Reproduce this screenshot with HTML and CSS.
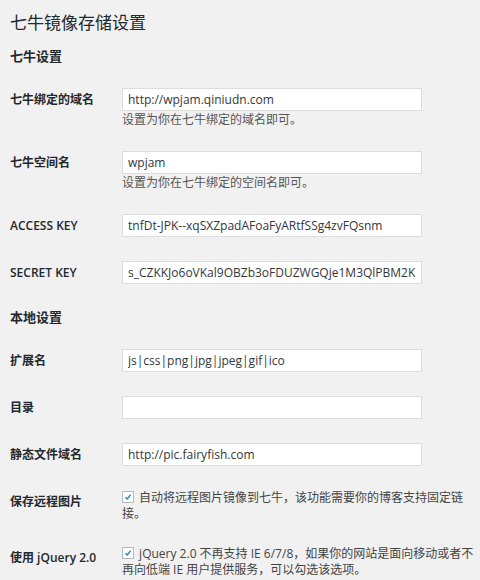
FILE: index.html
```html
<!DOCTYPE html>
<html lang="zh-CN">
<head>
<meta charset="utf-8">
<title>七牛镜像存储设置</title>
<link rel="stylesheet" href="styles.css">
</head>
<body>
<div class="wrap">
  <h1 class="page-title">七牛镜像存储设置</h1>

  <h2 class="section-title">七牛设置</h2>
  <div class="form-table">
    <div class="row">
      <label class="row-label">七牛绑定的域名</label>
      <div class="field">
        <input class="text-input" type="text" value="http://wpjam.qiniudn.com">
        <p class="description">设置为你在七牛绑定的域名即可。</p>
      </div>
    </div>
    <div class="row">
      <label class="row-label">七牛空间名</label>
      <div class="field">
        <input class="text-input" type="text" value="wpjam">
        <p class="description">设置为你在七牛绑定的空间名即可。</p>
      </div>
    </div>
    <div class="row">
      <label class="row-label">ACCESS KEY</label>
      <div class="field">
        <input class="text-input" type="text" value="tnfDt-JPK--xqSXZpadAFoaFyARtfSSg4zvFQsnm">
      </div>
    </div>
    <div class="row">
      <label class="row-label">SECRET KEY</label>
      <div class="field">
        <input class="text-input" type="text" value="s_CZKKJo6oVKal9OBZb3oFDUZWGQje1M3QlPBM2K">
      </div>
    </div>
  </div>

  <h2 class="section-title">本地设置</h2>
  <div class="form-table">
    <div class="row">
      <label class="row-label">扩展名</label>
      <div class="field">
        <input class="text-input" type="text" value="js|css|png|jpg|jpeg|gif|ico">
      </div>
    </div>
    <div class="row">
      <label class="row-label">目录</label>
      <div class="field">
        <input class="text-input" type="text" value="">
      </div>
    </div>
    <div class="row">
      <label class="row-label">静态文件域名</label>
      <div class="field">
        <input class="text-input" type="text" value="http://pic.fairyfish.com">
      </div>
    </div>
    <div class="row">
      <span class="row-label">保存远程图片</span>
      <div class="field">
        <label class="check-label"><span class="checkbox"><svg viewBox="0 0 12 12" width="12" height="12"><path d="M3 6.2 L5.1 8.3 L9.2 3.4" fill="none" stroke="#1e8cbe" stroke-width="1.8"/></svg></span> 自动将远程图片镜像到七牛，该功能需要你的博客支持固定链接。</label>
      </div>
    </div>
    <div class="row">
      <span class="row-label">使用 jQuery 2.0</span>
      <div class="field">
        <label class="check-label"><span class="checkbox"><svg viewBox="0 0 12 12" width="12" height="12"><path d="M3 6.2 L5.1 8.3 L9.2 3.4" fill="none" stroke="#1e8cbe" stroke-width="1.8"/></svg></span> jQuery 2.0 不再支持 IE 6/7/8，如果你的网站是面向移动或者不再向低端 IE 用户提供服务，可以勾选该选项。</label>
      </div>
    </div>
  </div>
</div>
</body>
</html>
```

FILE: styles.css
```css
html, body {
  margin: 0;
  padding: 0;
  background: #f1f1f1;
}

body {
  font-family: "Open Sans", "Noto Sans CJK SC", sans-serif;
  font-size: 12px;
  color: #444;
}

.wrap {
  padding: 11px 5px 0 10px;
}

.page-title {
  margin: 0;
  font-size: 17px;
  line-height: 24px;
  font-weight: 400;
  color: #23282d;
}

.section-title {
  margin: 11px 0 10px;
  font-size: 13px;
  line-height: 20px;
  font-weight: 600;
  color: #23282d;
}

.form-table {
  display: flex;
  flex-direction: column;
}

.row {
  display: grid;
  grid-template-columns: 112px 1fr;
  padding: 12px 0;
}

.row-label {
  font-size: 12px;
  line-height: 23px;
  font-weight: 600;
  color: #23282d;
}

.field {
  min-width: 0;
}

.text-input {
  display: block;
  box-sizing: border-box;
  width: 300px;
  height: 23px;
  margin: 0;
  padding: 0 5px;
  border: 1px solid #ddd;
  background: #fff;
  font-family: "Open Sans", "Noto Sans CJK SC", sans-serif;
  font-size: 12px;
  color: #32373c;
  outline: none;
}

.description {
  margin: 2px 0 0;
  line-height: 14px;
  color: #555;
}

.check-label {
  display: block;
  line-height: 16px;
  color: #444;
}

.checkbox {
  display: inline-block;
  box-sizing: border-box;
  width: 12px;
  height: 12px;
  border: 1px solid #b4b9be;
  background: #fff;
  vertical-align: -1px;
  margin-right: 2px;
}

.checkbox svg {
  display: block;
  width: 10px;
  height: 10px;
}
```
